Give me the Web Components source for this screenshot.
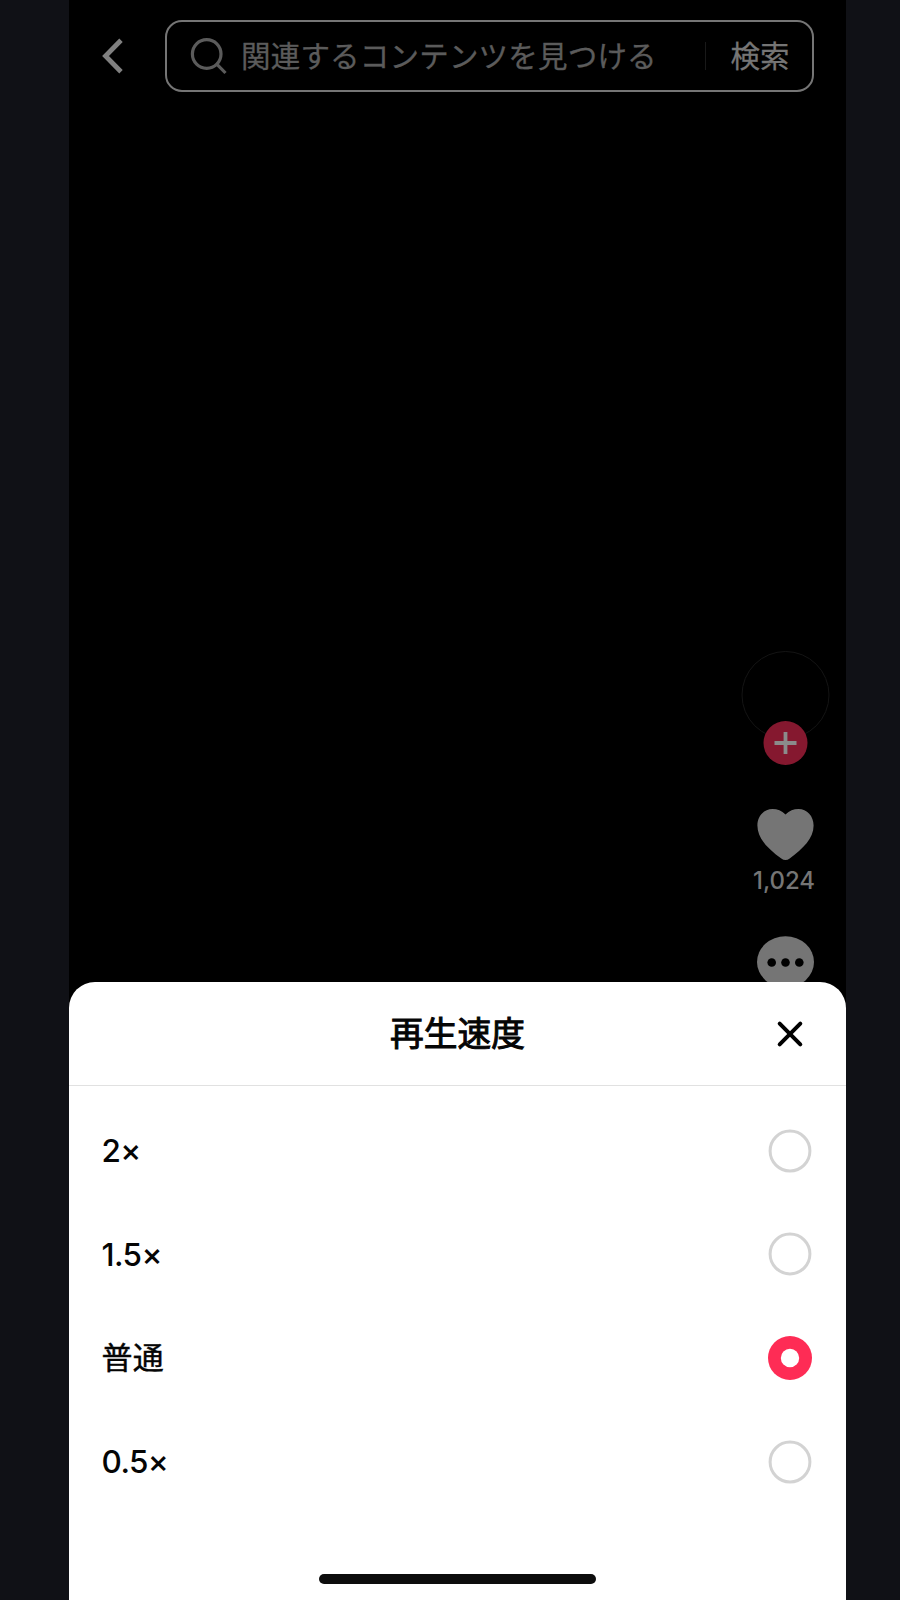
<!DOCTYPE html>
<html lang="ja">
<head>
<meta charset="utf-8">
<title>再生速度</title>
<style>
html,body{margin:0;height:1600px;overflow:hidden;background:#101116}
body{font-family:Inter,"Noto Sans CJK JP",sans-serif}
</style>
</head>
<body>
<player-screen>
  <search-bar slot="top" placeholder="関連するコンテンツを見つける" action="検索"></search-bar>
  <action-rail slot="rail" likes="1,024"></action-rail>
  <speed-sheet slot="sheet" heading="再生速度">
    <speed-option>2×</speed-option>
    <speed-option>1.5×</speed-option>
    <speed-option selected>普通</speed-option>
    <speed-option>0.5×</speed-option>
  </speed-sheet>
</player-screen>
<script>
class BaseElement extends HTMLElement {
  constructor() {
    super();
    this.attachShadow({mode: 'open'}).innerHTML = '<style>*{box-sizing:border-box}svg{display:block;flex:none}</style>' + this.render();
  }
}

customElements.define('player-screen', class extends BaseElement {
  render() {
    return `<style>
      :host{display:block;width:777px;height:1600px;margin-left:69px;background:#000;overflow:hidden}
      .page{display:flex;flex-direction:column;height:100%}
      .stage{height:982px;flex:none;display:flex;flex-direction:column;justify-content:space-between}
      .sheet{flex:1;display:flex}
    </style>
    <div class="page"><div class="stage"><slot name="top"></slot><slot name="rail"></slot></div>
    <div class="sheet"><slot name="sheet"></slot></div></div>`;
  }
});

customElements.define('search-bar', class extends BaseElement {
  render() {
    return `<style>
      :host{display:flex;align-items:center;padding:20px 32px 0 32px;color:#757575}
      .box{margin-left:42px;width:649px;height:72px;border:2px solid #757575;border-radius:17px;display:flex;align-items:center;padding-left:23px}
      .hint{font-size:29.5px;letter-spacing:.2px;line-height:40px;margin-left:13px;color:#5b5b5b;-webkit-text-stroke:.3px #5b5b5b;white-space:nowrap;width:464px;flex:none;padding-bottom:1px}
      .line{width:1px;height:28px;background:#191919;flex:none}
      .go{font-size:29.5px;line-height:40px;-webkit-text-stroke:.3px #757575;margin-left:24.500px;white-space:nowrap;padding-bottom:1px}
    </style>
    <svg width="22" height="40" viewBox="0 0 22 40" fill="none" stroke="#808080" stroke-width="4.800"><path d="M20 4.200 4.500 20 20 35.800"/></svg>
    <div class="box">
      <svg width="38" height="38" viewBox="0 0 38 38" fill="none" stroke="#5b5b5b" stroke-width="3.200"><circle cx="16.700" cy="17" r="14.300"/><path d="M26.500 26.800 35.500 36"/></svg>
      <span class="hint">${this.getAttribute('placeholder')}</span><i class="line"></i>
      <span class="go">${this.getAttribute('action')}</span>
    </div>`;
  }
});

customElements.define('action-rail', class extends BaseElement {
  render() {
    return `<style>
      :host{display:flex;flex-direction:column;align-items:center;width:91px;height:331px;overflow:hidden;margin-left:671px;color:#757575}
      .likes{font-size:24px;line-height:30px;font-weight:500;letter-spacing:-.1px;margin-top:5px;margin-left:-3px}
      .chat{margin-top:40px}
    </style>
    <svg width="91" height="116" viewBox="0 0 91 116"><circle cx="45.500" cy="44" r="43.500" fill="none" stroke="#141414"/><circle cx="45.500" cy="92" r="22" fill="#85182f"/><path d="M45.500 81v22M34.500 92h22" stroke="#8b8b8b" stroke-width="3.800"/></svg>
    <svg style="margin-top:42px" width="57" height="52" viewBox="0.500 0 57 52"><path fill="#757575" d="M29 5.500C33 1.700 37 0 42 0 50.500 0 57.100 7 57.100 16.500 57.100 29.500 46.500 39.500 33.200 49.600Q29 52.600 24.800 49.600C11.500 39.500.900 29.500.900 16.500.900 7 7.500 0 16 0 21 0 25 1.700 29 5.500Z"/></svg>
    <span class="likes">${this.getAttribute('likes')}</span>
    <svg class="chat" width="57" height="60" viewBox="0.500 0 57 60"><ellipse cx="29" cy="26" rx="28.500" ry="25.700" fill="#757575"/><g fill="#000"><circle cx="15.200" cy="26.500" r="4.300"/><circle cx="29" cy="26.500" r="4.300"/><circle cx="42.800" cy="26.500" r="4.300"/></g></svg>`;
  }
});

customElements.define('speed-sheet', class extends BaseElement {
  render() {
    return `<style>
      :host{display:flex;flex-direction:column;width:777px;background:#fff;border-radius:26px 26px 0 0;color:#050505}
      header{display:grid;grid-template-columns:80px 1fr 80px;align-items:center;height:104px;border-bottom:1px solid #e1e1e1;flex:none}
      h1{margin:0;text-align:center;font-size:33.700px;line-height:50px;font-weight:400;-webkit-text-stroke:1px #050505}
      header svg{margin-left:10px}
      .list{display:flex;flex-direction:column;padding-top:13px}
      .home{width:277px;height:10px;border-radius:5px;background:#0d0d0d;margin:auto auto 16px}
    </style>
    <header><span></span><h1>${this.getAttribute('heading')}</h1>
      <svg width="28" height="28" viewBox="0 0 28 28" stroke="#000" stroke-width="4" stroke-linecap="round"><path d="M3.700 3.700 24.300 24.300M24.300 3.700 3.700 24.300"/></svg>
    </header>
    <div class="list"><slot></slot></div><div class="home"></div>`;
  }
});

customElements.define('speed-option', class extends BaseElement {
  render() {
    return `<style>
      :host{display:flex;align-items:center;justify-content:space-between;height:103.600px;padding:0 34px 0 32.500px;font-size:31.500px;letter-spacing:-.600px;line-height:44px;font-weight:500;font-feature-settings:"calt" 0;color:#050505}
      span{padding-top:1px}
      :host([selected]) span{font-weight:400;-webkit-text-stroke:.400px #050505;padding-top:1px;font-size:31px;letter-spacing:.200px}
    </style>
    <span><slot></slot></span>
    <svg width="44" height="44" viewBox="0 0 44 44">${this.hasAttribute('selected')
      ? '<circle cx="22" cy="22" r="22" fill="#fe2c55"/><circle cx="22" cy="22" r="9.200" fill="#fff"/>'
      : '<circle cx="22" cy="22" r="19.900" fill="none" stroke="#d3d3d3" stroke-width="3"/>'}</svg>`;
  }
});
</script>
</body>
</html>
